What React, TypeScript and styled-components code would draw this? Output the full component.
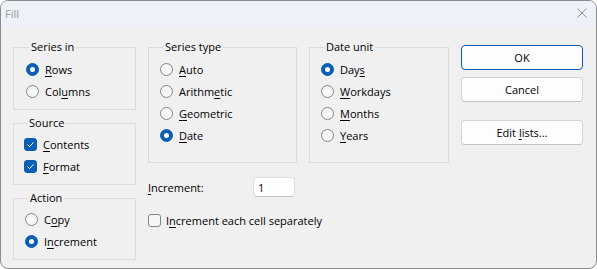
import React from "react";
import styled, { createGlobalStyle } from "styled-components";

const GlobalStyle = createGlobalStyle`
  html, body {
    margin: 0;
    padding: 0;
    background: #ffffff;
  }
  body {
    font-family: "Open Sans", "Noto Sans", sans-serif;
  }
`;

const Window = styled.div`
  box-sizing: border-box;
  width: 597px;
  height: 269px;
  border: 1px solid #8c8c8c;
  border-radius: 8px;
  overflow: hidden;
  display: flex;
  flex-direction: column;
  background: #f0f0f0;
  font-family: "Open Sans", "Noto Sans", sans-serif;
  font-size: 11px;
  color: #000000;
`;

const TitleBar = styled.div`
  height: 25px;
  flex: none;
  display: flex;
  align-items: center;
  justify-content: space-between;
  padding: 0 9px 1px 4px;
  box-sizing: border-box;
  background: #eff1f8;
`;

const Title = styled.span`
  color: #9a9a9a;
  font-size: 11px;
`;

const CloseIcon = styled.svg`
  width: 10px;
  height: 10px;
  display: block;
`;

const Body = styled.div`
  flex: 1;
  display: flex;
  gap: 12px;
  padding: 13px 12px 0 12px;
`;

const Column = styled.div<{ $width?: number }>`
  display: flex;
  flex-direction: column;
  gap: 5px;
  width: ${(p) => (p.$width ? `${p.$width}px` : "auto")};
  flex: none;
`;

const Group = styled.fieldset<{ $width?: number; $height: number; $top?: number; $left: number }>`
  box-sizing: border-box;
  margin: 0;
  min-width: 0;
  width: ${(p) => (p.$width ? `${p.$width}px` : "auto")};
  height: ${(p) => p.$height}px;
  padding: ${(p) => p.$top ?? 3}px 0 0 ${(p) => p.$left}px;
  border: 1px solid #dcdcdc;
  border-radius: 0;
`;

const Legend = styled.legend`
  margin-left: 3px;
  padding: 0 2px;
  line-height: 16px;
  font-size: 11px;
`;

const OptionRow = styled.label`
  display: flex;
  align-items: center;
  gap: 6px;
  height: 22px;
  white-space: nowrap;
`;

const RadioMark = styled.span<{ $checked?: boolean }>`
  box-sizing: border-box;
  flex: none;
  width: 13px;
  height: 13px;
  border-radius: 50%;
  border: 1px solid ${(p) => (p.$checked ? "#0a5fb4" : "#858585")};
  background: ${(p) => (p.$checked ? "#0a5fb4" : "#f7f7f7")};
  display: flex;
  align-items: center;
  justify-content: center;

  &::after {
    content: "";
    display: ${(p) => (p.$checked ? "block" : "none")};
    width: 5px;
    height: 5px;
    border-radius: 50%;
    background: #ffffff;
  }
`;

const CheckMark = styled.span<{ $checked?: boolean }>`
  box-sizing: border-box;
  flex: none;
  width: 13px;
  height: 13px;
  border-radius: 3px;
  border: 1px solid ${(p) => (p.$checked ? "#0a5fb4" : "#858585")};
  background: ${(p) => (p.$checked ? "#0a5fb4" : "#f7f7f7")};
  display: flex;
  align-items: center;
  justify-content: center;

  svg {
    width: 11px;
    height: 11px;
    display: block;
  }
`;

const Key = styled.span`
  text-decoration: underline;
  text-underline-offset: 2px;
  text-decoration-thickness: 1px;
`;

const Middle = styled.div`
  display: flex;
  flex-direction: column;
  width: 301px;
  flex: none;
`;

const TopRow = styled.div`
  display: flex;
  gap: 12px;
`;

const IncrementRow = styled.div`
  display: flex;
  align-items: center;
  height: 20px;
  margin-top: 14px;
`;

const IncrementLabel = styled.span`
  width: 105px;
  flex: none;
`;

const NumberInput = styled.div`
  box-sizing: border-box;
  width: 42px;
  height: 20px;
  padding: 0 4px;
  display: flex;
  align-items: center;
  background: #ffffff;
  border: 1px solid #dcdcdc;
  border-bottom-color: #c4c4c4;
  border-radius: 4px;
`;

const SeparateRow = styled.label`
  display: flex;
  align-items: center;
  gap: 5px;
  height: 20px;
  margin-top: 13px;
`;

const Buttons = styled.div`
  display: flex;
  flex-direction: column;
  width: 122px;
  flex: none;
  padding-top: 6px;
`;

const Button = styled.button<{ $default?: boolean; $gap?: number }>`
  box-sizing: border-box;
  height: 25px;
  width: 100%;
  margin: ${(p) => p.$gap ?? 0}px 0 0 0;
  padding: 0;
  font-family: inherit;
  font-size: 11px;
  color: #000000;
  background: #fdfdfd;
  border: 1px solid ${(p) => (p.$default ? "#0a5fb4" : "#d3d3d3")};
  border-bottom-color: ${(p) => (p.$default ? "#0a5fb4" : "#c2c2c2")};
  border-radius: 4px;
`;

const Radio: React.FC<{ checked?: boolean; children: React.ReactNode }> = ({ checked, children }) => (
  <OptionRow>
    <RadioMark $checked={checked} />
    <span>{children}</span>
  </OptionRow>
);

const Tick = () => (
  <svg viewBox="0 0 11 11">
    <path d="M2.5 5.6 L4.6 7.6 L8.6 3.4" fill="none" stroke="#ffffff" strokeWidth={1} />
  </svg>
);

const Check: React.FC<{ checked?: boolean; children: React.ReactNode }> = ({ checked, children }) => (
  <OptionRow>
    <CheckMark $checked={checked}>{checked && <Tick />}</CheckMark>
    <span>{children}</span>
  </OptionRow>
);

export default function App() {
  return (
    <>
      <GlobalStyle />
      <Window>
        <TitleBar>
          <Title>Fill</Title>
          <CloseIcon viewBox="0 0 10 10">
            <path d="M0.5 0.5 L9.5 9.5 M9.5 0.5 L0.5 9.5" stroke="#8f8f8f" strokeWidth={1} />
          </CloseIcon>
        </TitleBar>
        <Body>
          <Column $width={123}>
            <Group $height={71} $left={12}>
              <Legend>Series in</Legend>
              <Radio checked>
                <Key>R</Key>ows
              </Radio>
              <Radio>
                Col<Key>u</Key>mns
              </Radio>
            </Group>
            <Group $height={70} $left={10} $top={2}>
              <Legend>Source</Legend>
              <Check checked>
                <Key>C</Key>ontents
              </Check>
              <Check checked>
                <Key>F</Key>ormat
              </Check>
            </Group>
            <Group $height={70} $left={11} $top={2}>
              <Legend>Action</Legend>
              <Radio>
                C<Key>o</Key>py
              </Radio>
              <Radio checked>
                I<Key>n</Key>crement
              </Radio>
            </Group>
          </Column>

          <Middle>
            <TopRow>
              <Group $width={149} $height={124} $left={11}>
                <Legend>Series type</Legend>
                <Radio>
                  <Key>A</Key>uto
                </Radio>
                <Radio>
                  Arithm<Key>e</Key>tic
                </Radio>
                <Radio>
                  <Key>G</Key>eometric
                </Radio>
                <Radio checked>
                  <Key>D</Key>ate
                </Radio>
              </Group>
              <Group $width={140} $height={124} $left={11}>
                <Legend>Date unit</Legend>
                <Radio checked>
                  Day<Key>s</Key>
                </Radio>
                <Radio>
                  <Key>W</Key>orkdays
                </Radio>
                <Radio>
                  <Key>M</Key>onths
                </Radio>
                <Radio>
                  <Key>Y</Key>ears
                </Radio>
              </Group>
            </TopRow>
            <IncrementRow>
              <IncrementLabel>
                <Key>I</Key>ncrement:
              </IncrementLabel>
              <NumberInput>1</NumberInput>
            </IncrementRow>
            <SeparateRow>
              <CheckMark />
              <span>
                I<Key>n</Key>crement each cell separately
              </span>
            </SeparateRow>
          </Middle>

          <Buttons>
            <Button $default>OK</Button>
            <Button $gap={7}>Cancel</Button>
            <Button $gap={18}>
              Edit <Key>l</Key>ists...
            </Button>
          </Buttons>
        </Body>
      </Window>
    </>
  );
}
